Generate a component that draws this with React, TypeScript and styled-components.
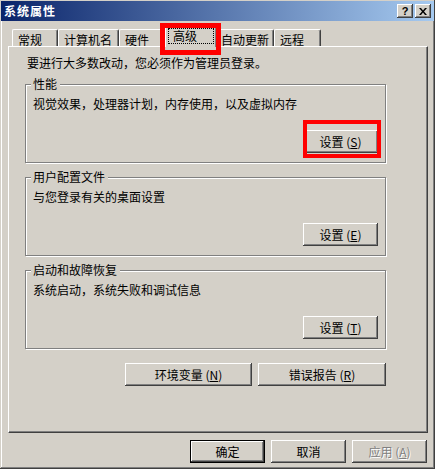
import React from 'react'
import styled, {createGlobalStyle} from 'styled-components'

const GlobalStyle = createGlobalStyle`
  html, body {
    margin: 0;
    padding: 0;
    background: #d4d0c8;
  }

  body {
    font-family: "Noto Sans CJK SC", "Noto Sans", sans-serif;
    font-size: 12px;
    color: #000;
  }
`

const raised = `
  box-shadow: inset -1px -1px #404040, inset 1px 1px #ffffff,
  inset -2px -2px #808080, inset 2px 2px #d4d0c8;
`

const Window = styled.div`
  width: 435px;
  height: 469px;
  box-sizing: border-box;
  padding: 1px 1px 2px 1px;
  background: #d4d0c8;
  box-shadow: inset -1px -1px #404040, inset 1px 1px #d4d0c8,
  inset -2px -2px #808080, inset 2px 2px #ffffff;
  display: flex;
  flex-direction: column;
`

const TitleBar = styled.div`
  height: 20px;
  display: flex;
  align-items: center;
  padding: 0 3px 0 3px;
  background: linear-gradient(to right, #0a246a, #a6caf0);
`

const Title = styled.div`
  flex: 1;
  color: #fff;
  font-weight: bold;
  font-size: 12px;
  letter-spacing: 1px;
  line-height: 14px;
`

const CaptionButton = styled.div`
  width: 16px;
  height: 14px;
  margin-left: 2px;
  background: #d4d0c8;
  display: flex;
  align-items: center;
  justify-content: center;
  font-family: "Liberation Sans", Arial, sans-serif;
  font-weight: bold;
  font-size: 11px;
  line-height: 12px;
  ${raised}
`

const Body = styled.div`
  flex: 1;
  display: flex;
  flex-direction: column;
  padding: 0 6px 0 7px;
`

const TabRow = styled.div`
  display: flex;
  align-items: flex-end;
  height: 20px;
  margin-top: 5px;
  padding-left: 4px;
`

const Tab = styled.div<{ $w: number }>`
  width: ${p => p.$w}px;
  height: 17px;
  box-sizing: border-box;
  padding: 3px 0 0 5px;
  line-height: 14px;
  white-space: nowrap;
  background: #d4d0c8;
  border-top: 1px solid #fff;
  border-left: 1px solid #fff;
  border-right: 1px solid #404040;
  border-radius: 2px 2px 0 0;
  box-shadow: inset -1px 0 #808080;
`

const ActiveTab = styled(Tab)`
  position: relative;
  z-index: 1;
  height: 21px;
  margin: 0 -2px -1px -2px;
  padding: 0;
`

const FocusBox = styled.div`
  height: 16px;
  box-sizing: border-box;
  margin: 1px 2px 0 2px;
  padding-left: 4px;
  border: 1px dotted #000;
  line-height: 14px;
`

const RedFrame = styled.span<{ $t: number, $r: number, $b: number, $l: number, $w: number }>`
  position: absolute;
  top: ${p => p.$t}px;
  right: ${p => p.$r}px;
  bottom: ${p => p.$b}px;
  left: ${p => p.$l}px;
  border: ${p => p.$w}px solid #ff0000;
  pointer-events: none;
  z-index: 2;
`

const Panel = styled.div`
  height: 387px;
  box-sizing: border-box;
  padding: 9px 0 0 16px;
  border-top: 1px solid #fff;
  border-left: 1px solid #fff;
  border-right: 1px solid #404040;
  border-bottom: 1px solid #404040;
  box-shadow: inset -1px -1px #808080;
`

const Text = styled.div`
  line-height: 14px;
  white-space: nowrap;
`

const Intro = styled(Text)`
  margin-left: 2px;
`

const Group = styled.div`
  width: 361px;
  box-sizing: border-box;
  margin-top: 14px;
  padding: 0 7px 9px 7px;
  border: 1px solid #808080;
  box-shadow: inset 1px 1px #fff, 1px 1px #fff;

  &:first-of-type {
    margin-top: 22px;
  }
`

const Legend = styled.div`
  width: fit-content;
  margin: -8px 0 0 -2px;
  padding: 0 3px 0 2px;
  line-height: 14px;
  background: #d4d0c8;
`

const GroupText = styled(Text)`
  margin-top: 6px;
`

const GroupActions = styled.div`
  display: flex;
  justify-content: flex-end;
  margin-top: 19px;
`

const ButtonRow = styled.div`
  width: 361px;
  display: flex;
  justify-content: flex-end;
  gap: 6px;
  margin-top: 14px;
`

const Footer = styled.div`
  display: flex;
  justify-content: flex-end;
  gap: 6px;
  margin-top: 7px;
  padding-right: 1px;
`

const Slot = styled.span`
  position: relative;
  display: inline-flex;
`

const Button = styled.button<{ $w?: number, $default?: boolean }>`
  width: ${p => p.$w ?? 75}px;
  height: 23px;
  box-sizing: border-box;
  margin: 0;
  padding: 0;
  border: ${p => p.$default ? '1px solid #000' : 'none'};
  background: #d4d0c8;
  font-family: inherit;
  font-size: 12px;
  line-height: 14px;
  color: #000;
  white-space: nowrap;
  ${raised}

  &:disabled {
    color: #808080;
    text-shadow: 1px 1px #fff;
  }

  u {
    text-underline-offset: 1px;
  }
`

const tabs = [
    {label: '常规', w: 46},
    {label: '计算机名', w: 61},
    {label: '硬件', w: 48},
    {label: '高级', w: 52, active: true},
    {label: '自动更新', w: 59},
    {label: '远程', w: 47},
]

const groups = [
    {title: '性能', text: '视觉效果，处理器计划，内存使用，以及虚拟内存', key: 'S', marked: true},
    {title: '用户配置文件', text: '与您登录有关的桌面设置', key: 'E'},
    {title: '启动和故障恢复', text: '系统启动，系统失败和调试信息', key: 'T'},
]

const App = () => {
    return (
        <>
            <GlobalStyle/>
            <Window>
                <TitleBar>
                    <Title>系统属性</Title>
                    <CaptionButton>?</CaptionButton>
                    <CaptionButton>
                        <svg width="8" height="7" viewBox="0 0 8 7">
                            <path d="M0 0h2l2 2.4L6 0h2L5 3.5 8 7H6L4 4.6 2 7H0l3-3.5z" fill="#000"/>
                        </svg>
                    </CaptionButton>
                </TitleBar>

                <Body>
                    <TabRow>
                        {tabs.map(t => t.active ?
                            <ActiveTab key={t.label} $w={t.w}>
                                <FocusBox>{t.label}</FocusBox>
                                <RedFrame $t={-4} $r={-5} $b={-8} $l={-6} $w={5}/>
                            </ActiveTab>
                            :
                            <Tab key={t.label} $w={t.w}>{t.label}</Tab>
                        )}
                    </TabRow>

                    <Panel>
                        <Intro>要进行大多数改动，您必须作为管理员登录。</Intro>

                        {groups.map(g => (
                            <Group key={g.title}>
                                <Legend>{g.title}</Legend>
                                <GroupText>{g.text}</GroupText>
                                <GroupActions>
                                    <Slot>
                                        <Button>设置 (<u>{g.key}</u>)</Button>
                                        {g.marked && <RedFrame $t={-10} $r={-3} $b={-5} $l={0} $w={4}/>}
                                    </Slot>
                                </GroupActions>
                            </Group>
                        ))}

                        <ButtonRow>
                            <Button $w={127}>环境变量 (<u>N</u>)</Button>
                            <Button $w={128}>错误报告 (<u>R</u>)</Button>
                        </ButtonRow>
                    </Panel>

                    <Footer>
                        <Button $default>确定</Button>
                        <Button>取消</Button>
                        <Button disabled>应用 (<u>A</u>)</Button>
                    </Footer>
                </Body>
            </Window>
        </>
    )
}

export default App
